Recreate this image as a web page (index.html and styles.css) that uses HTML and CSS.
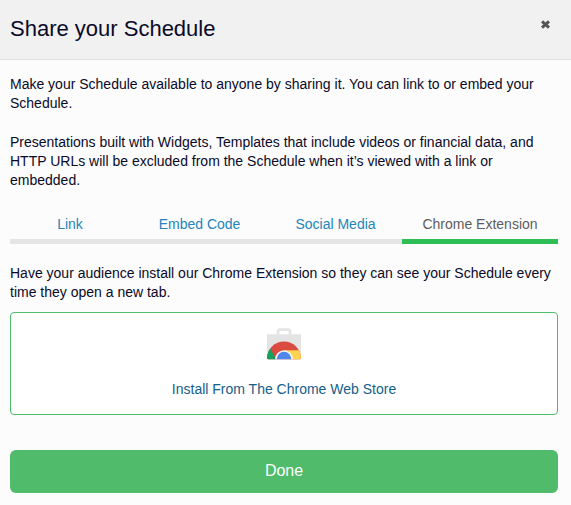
FILE: index.html
```html
<!DOCTYPE html>
<html lang="en">
<head>
<meta charset="utf-8">
<title>Share your Schedule</title>
<link rel="stylesheet" href="styles.css">
</head>
<body>
<header class="header">
  <h1 class="title">Share your Schedule</h1>
  <svg class="close" viewBox="0 0 11 11"><path d="M2 2.300 9 8.700M9 2.300 2 8.700"/></svg>
</header>
<main class="body">
  <p class="text">Make your Schedule available to anyone by sharing it. You can link to or embed your<br>Schedule.</p>
  <p class="text second">Presentations built with Widgets, Templates that include videos or financial data, and<br>HTTP URLs will be excluded from the Schedule when it’s viewed with a link or<br>embedded.</p>
  <nav class="tabs">
    <a class="tab link">Link</a>
    <a class="tab embed">Embed Code</a>
    <a class="tab social">Social Media</a>
    <a class="tab active">Chrome Extension</a>
  </nav>
  <p class="text intro">Have your audience install our Chrome Extension so they can see your Schedule every<br>time they open a new tab.</p>
  <a class="install">
    <svg class="store" viewBox="0 0 34 32">
      <defs>
        <clipPath id="bag"><path d="M0 6.300H34V29.800Q34 31.300 32.500 31.300H1.500Q0 31.300 0 29.800Z"/></clipPath>
        <clipPath id="wheel"><circle cx="17" cy="30.500" r="17"/></clipPath>
      </defs>
      <path d="M11 7V3.200Q11 1.600 12.600 1.600H21.400Q23 1.600 23 3.200V7" fill="none" stroke="#e4e4e4" stroke-width="2.600"/>
      <g clip-path="url(#bag)">
        <path d="M0 6H34V32H0Z" fill="#e4e4e4"/>
        <g clip-path="url(#wheel)">
          <path d="M0 13H34V32H0Z" fill="#db4a40"/>
          <path d="M3.300 20.500 9.500 32H0V20Z" fill="#14a05e"/>
          <path d="M17 22.300H34V32H20Z" fill="#ffd24f"/>
        </g>
        <circle cx="17" cy="31" r="8.800" fill="#f4f4f4"/>
        <circle cx="17" cy="31" r="7.200" fill="#5186ec"/>
      </g>
    </svg>
    <span>Install From The Chrome Web Store</span>
  </a>
  <button class="done">Done</button>
</main>
</body>
</html>
```
FILE: styles.css
```css
* { box-sizing: border-box; }
body { margin: 0; height: 505px; background: #fcfcfc; color: #0a0a28; font: 14px/19px "Liberation Sans", Arial, sans-serif; }
.header { height: 60px; padding: 0 20px 1px 10px; display: flex; align-items: center; justify-content: space-between; background: #f1f1f1; border-bottom: 1px solid #e3e3e3; }
.title { margin: 0; font-size: 22px; line-height: 30px; font-weight: 400; }
.close { width: 11px; height: 11px; margin-top: -10px; stroke: #555; stroke-width: 3; }
.body { padding: 15px 13px 0 10px; }
.text { margin: 0; white-space: nowrap; }
.second { margin-top: 20px; }
.tabs { display: flex; margin-top: 25px; height: 29px; }
.tab { border-bottom: 5px solid #e5e5e5; text-align: center; color: #2484bb; white-space: nowrap; }
.link { width: 120px; }
.embed { width: 139px; }
.social { width: 133px; }
.active { flex: 1; color: #5c5c5c; border-color: #2dbe55; }
.intro { margin-top: 20px; }
.install { margin-top: 10px; height: 103px; display: flex; flex-direction: column; align-items: center; padding-top: 15px; border: 1px solid #50bd6a; border-radius: 4px; background: #fff; color: #156089; }
.store { width: 34px; height: 32px; margin-bottom: 20px; }
.done { display: block; width: 100%; height: 43px; margin-top: 35px; padding: 0 0 2px; border: 0; border-radius: 6px; background: #50bb6a; color: #fff; font: 16px/20px "Liberation Sans", Arial, sans-serif; }
```
